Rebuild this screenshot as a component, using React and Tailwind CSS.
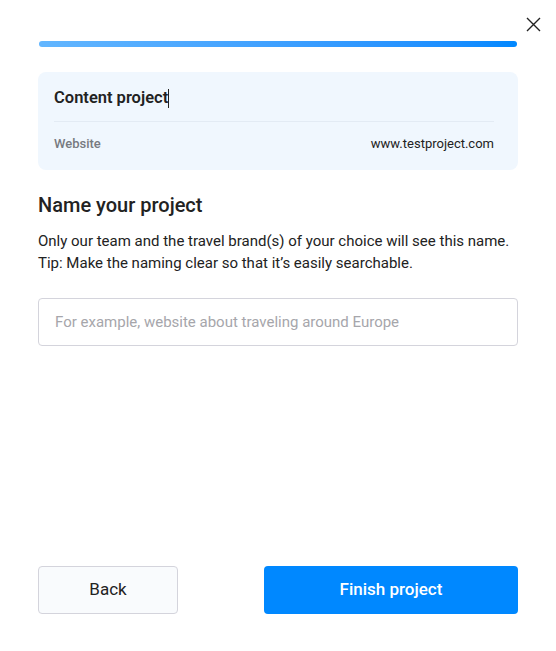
export default function App() {
  return (
    <div className="relative w-[556px] h-[651px] bg-white" style={{ fontFamily: "Roboto, 'Liberation Sans', sans-serif" }}>
      <button className="absolute right-[15px] top-[17px] w-[15px] h-[15px] text-[#222]">
        <svg width="15" height="15" viewBox="0 0 15 15" fill="none" stroke="currentColor" strokeWidth="1.4">
          <path d="M1 1L14 14M14 1L1 14" />
        </svg>
      </button>
      <div className="flex flex-col h-full px-[38px] pt-[41px] pb-[37px]">
        <div className="h-[6px] mx-[1px] rounded-full bg-gradient-to-r from-[#62b6ff] to-[#0088ff]" />
        <div className="mt-[25px] bg-[#f0f7fe] rounded-[8px] pl-[16px] pr-[24px] pt-[16px] pb-[17px]">
          <div className="flex items-center h-[20px] text-[16.5px] font-semibold text-[#222]">
            Content project<span className="inline-block w-[1px] h-[19px] bg-[#222]" />
          </div>
          <div className="mt-[13px] border-t border-[#e3ebf4]" />
          <div className="flex justify-between items-center mt-[13px] h-[18px]">
            <span className="text-[13px] font-medium text-[#777a80]">Website</span>
            <span className="text-[13px] text-[#222]">www.testproject.com</span>
          </div>
        </div>
        <h2 className="mt-[22px] text-[20px] font-medium text-[#222] leading-[26px]">Name your project</h2>
        <p className="mt-[12px] text-[15px] leading-[22px] text-[#222]">
          Only our team and the travel brand(s) of your choice will see this name.
          <br />
          Tip: Make the naming clear so that it’s easily searchable.
        </p>
        <input
          className="mt-[24px] h-[48px] w-full border border-[#d4d4dc] rounded-[4px] px-[16px] text-[15px] text-[#222] placeholder-[#a6a6ab] outline-none"
          placeholder="For example, website about traveling around Europe"
        />
        <div className="flex-1" />
        <div className="flex justify-between">
          <button className="w-[140px] h-[48px] border border-[#d4d4dc] rounded-[4px] bg-[#f9fbfd] text-[17px] text-[#222]">Back</button>
          <button className="w-[254px] h-[48px] rounded-[4px] bg-[#0088ff] text-[17px] font-medium text-white">Finish project</button>
        </div>
      </div>
    </div>
  );
}
